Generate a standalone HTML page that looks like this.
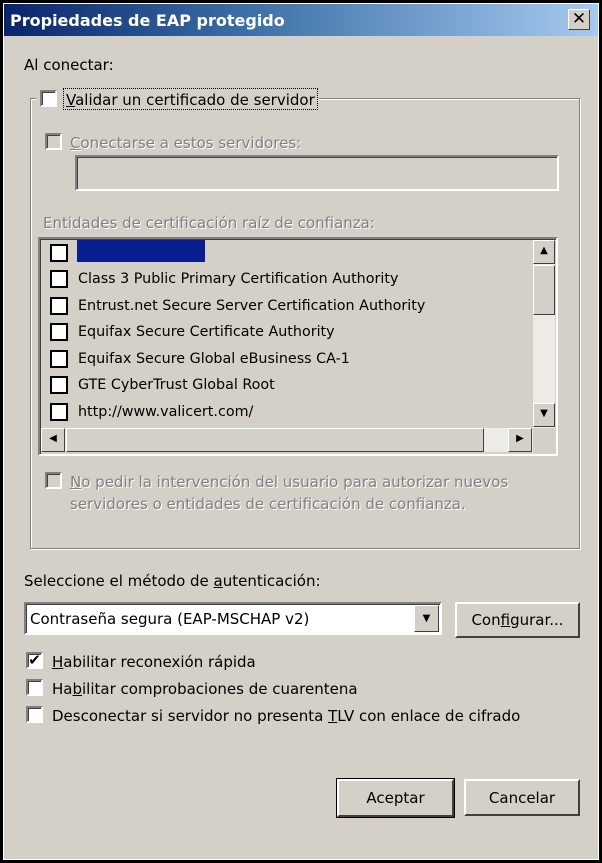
<!DOCTYPE html>
<html><head><meta charset="utf-8"><style>
*{box-sizing:border-box}
body{margin:0;width:602px;height:863px;background:#000;font-family:"DejaVu Sans","Liberation Sans",sans-serif;font-size:15px;color:#000;position:relative;overflow:hidden}
.win{position:absolute;left:3px;top:3px;width:596px;height:857px;background:#d4d0c8;border:1px solid #fff}
.a{position:absolute;white-space:nowrap}
.title{position:absolute;left:4px;top:4px;width:594px;height:32px;background:linear-gradient(90deg,#0a246a 0%,#3a6ea5 40%,#a6caf0 100%);color:#fff;font-weight:bold;font-size:16px;padding:7px 6px}
.x{position:absolute;left:568px;top:9px;width:22px;height:21px;background:#d4d0c8;border:1px solid;border-color:#fff #404040 #404040 #fff;font-size:17px;font-weight:bold;text-align:center;line-height:18px;color:#000}
.cb{position:absolute;width:17px;height:17px;background:#fff;border:2px solid;border-color:#808080 #fff #fff #808080;box-shadow:inset 1px 1px 0 #404040}
.cbd{background:#d4d0c8}
.lcb{position:absolute;width:18px;height:18px;background:#fff;border:2px solid #000}
.grp{position:absolute;border:1px solid #808080;box-shadow:1px 1px 0 #fff,inset 1px 1px 0 #fff}
.dis{color:#808080;text-shadow:1px 1px 0 #fff}
.btn{position:absolute;background:#d4d0c8;border:2px solid;border-color:#fff #404040 #404040 #fff;text-align:center}
.sunk{position:absolute;border:2px solid;border-color:#808080 #fff #fff #808080;box-shadow:inset 1px 1px 0 #404040}
.sb{position:absolute;background:#d4d0c8;border:1px solid;border-color:#fff #404040 #404040 #fff;font-size:10px;text-align:center;line-height:20px}
.li{font-size:14.3px}
u{text-decoration:underline}
</style></head><body>
<div class="win"></div>
<div class="title">Propiedades de EAP protegido</div>
<div class="x">✕</div>
<div class="a" style="left:24px;top:56px">Al conectar:</div>
<div class="grp" style="left:30px;top:98px;width:550px;height:451px"></div>
<div class="a" style="left:36px;top:88px;width:283px;height:24px;background:#d4d0c8"></div>
<div class="cb" style="left:40px;top:90px"></div>
<div class="a" style="left:63px;top:88px;border:1px dotted #000;padding:2px 2px 0"><u>V</u>alidar un certificado de servidor</div>
<div class="cb cbd" style="left:45px;top:133px"></div>
<div class="a dis" style="left:70px;top:134px"><u>C</u>onectarse a estos servidores:</div>
<div class="sunk" style="left:75px;top:155px;width:484px;height:36px"></div>
<div class="a dis" style="left:43px;top:214px">Entidades de certificación raíz de confianza:</div>
<div class="sunk" style="left:38px;top:237px;width:520px;height:219px;background:#d4d0c8"></div>
<div class="lcb" style="left:50px;top:244px"></div>
<div class="a" style="left:77px;top:240px;width:128px;height:22px;background:#0a1f8f"></div>
<div class="lcb" style="left:50px;top:270px"></div><div class="a li" style="left:78px;top:271px">Class 3 Public Primary Certification Authority</div>
<div class="lcb" style="left:50px;top:297px"></div><div class="a li" style="left:78px;top:298px">Entrust.net Secure Server Certification Authority</div>
<div class="lcb" style="left:50px;top:323px"></div><div class="a li" style="left:78px;top:324px">Equifax Secure Certificate Authority</div>
<div class="lcb" style="left:50px;top:350px"></div><div class="a li" style="left:78px;top:351px">Equifax Secure Global eBusiness CA-1</div>
<div class="lcb" style="left:50px;top:376px"></div><div class="a li" style="left:78px;top:377px">GTE CyberTrust Global Root</div>
<div class="lcb" style="left:50px;top:403px"></div><div class="a li" style="left:78px;top:404px">http://www.valicert.com/</div>
<div class="a" style="left:533px;top:240px;width:22px;height:188px;background:#ecebe6"></div>
<div class="sb" style="left:533px;top:240px;width:22px;height:24px">▲</div>
<div class="sb" style="left:533px;top:265px;width:22px;height:50px"></div>
<div class="sb" style="left:533px;top:403px;width:22px;height:24px">▼</div>
<div class="a" style="left:41px;top:428px;width:492px;height:24px;background:#ecebe6"></div>
<div class="sb" style="left:41px;top:428px;width:24px;height:24px">◀</div>
<div class="sb" style="left:66px;top:428px;width:418px;height:24px"></div>
<div class="sb" style="left:508px;top:428px;width:24px;height:24px">▶</div>
<div class="cb cbd" style="left:45px;top:472px"></div>
<div class="a dis" style="left:70px;top:471px;line-height:22px"><u>N</u>o pedir la intervención del usuario para autorizar nuevos<br>servidores o entidades de certificación de confianza.</div>
<div class="a" style="left:24px;top:572px">Seleccione el método de <u>a</u>utenticación:</div>
<div class="sunk" style="left:24px;top:602px;width:418px;height:33px;background:#fff"></div>
<div class="a" style="left:30px;top:610px">Contraseña segura (EAP-MSCHAP v2)</div>
<div class="sb" style="left:414px;top:605px;width:25px;height:27px;line-height:25px">▼</div>
<div class="btn" style="left:455px;top:602px;width:125px;height:36px;line-height:32px">Con<u>f</u>igurar...</div>
<div class="cb" style="left:26px;top:652px;font-size:15px;line-height:13px;text-align:center;font-weight:bold">✔</div>
<div class="a" style="left:52px;top:653px"><u>H</u>abilitar reconexión rápida</div>
<div class="cb" style="left:26px;top:679px"></div>
<div class="a" style="left:52px;top:680px">Ha<u>b</u>ilitar comprobaciones de cuarentena</div>
<div class="cb" style="left:26px;top:706px"></div>
<div class="a" style="left:52px;top:707px">Desconectar si servidor no presenta <u>T</u>LV con enlace de cifrado</div>
<div class="btn" style="left:337px;top:779px;width:117px;height:38px;line-height:34px;outline:1px solid #000">Aceptar</div>
<div class="btn" style="left:464px;top:779px;width:116px;height:37px;line-height:34px">Cancelar</div>
</body></html>
